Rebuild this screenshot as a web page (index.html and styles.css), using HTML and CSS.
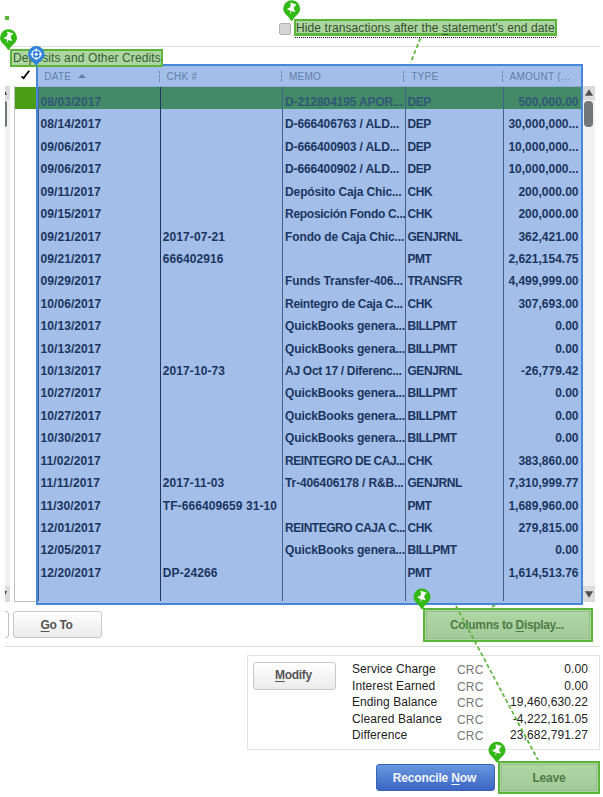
FILE: index.html
```html
<!DOCTYPE html>
<html lang="en">
<head>
<meta charset="utf-8">
<title>Reconcile</title>
<link rel="stylesheet" href="styles.css">
</head>
<body>
<main class="window">
  <header class="options">
    <label class="option"><span class="checkbox"></span><span class="option-text">Hide transactions after the <u>s</u>tatement's end date</span></label>
  </header>
  <section class="heading"><h1>Deposits and Other Credits</h1></section>
  <section class="lists">
    <div class="scroll scroll-left">
      <svg class="arrow" viewBox="0 0 5 14"><path d="M0 5 2 9H0Z" fill="#333"/></svg>
      <span class="thumb"></span>
      <svg class="arrow" viewBox="0 0 5 14"><path d="M0 4H2L0 8Z" fill="#333"/></svg>
    </div>
    <div class="marks">
      <div class="mark-head"><svg width="12" height="12" viewBox="0 0 12 12"><path d="M1.5 7.3 3.6 9.2 6 5.7 9.3 1.7" fill="none" stroke="#000" stroke-width="1.8"/></svg></div>
      <div class="mark-row"></div>
    </div>
    <div class="grid">
      <div class="grid-head">
        <span>DATE <svg class="sort" width="8" height="4" viewBox="0 0 8 4"><path d="M4 0 8 4H0Z" fill="#6080ab"/></svg></span>
        <span>CHK #</span><span>MEMO</span><span>TYPE</span><span>AMOUNT (...</span>
      </div>
      <div class="grid-body" id="rows"></div>
    </div>
    <div class="scroll scroll-right">
      <svg class="arrow" viewBox="0 0 13 14"><path d="M6.5 3 11 10H2Z" fill="#505050"/></svg>
      <span class="thumb"></span>
      <svg class="arrow" viewBox="0 0 13 14"><path d="M2 4H11L6.5 11Z" fill="#505050"/></svg>
    </div>
  </section>
  <section class="toolbar">
    <span class="button-end"></span>
    <button class="button goto"><span><u>G</u>o To</span></button>
    <button class="button columns"><span>Columns to <u>D</u>isplay...</span></button>
  </section>
  <section class="summary">
    <button class="button modify"><span><u>M</u>odify</span></button>
    <div class="totals">
      <span>Service Charge</span><i>CRC</i><b>0.00</b>
      <span>Interest Earned</span><i>CRC</i><b>0.00</b>
      <span>Ending Balance</span><i>CRC</i><b>19,460,630.22</b>
      <span>Cleared Balance</span><i>CRC</i><b>-4,222,161.05</b>
      <span>Difference</span><i>CRC</i><b>23,682,791.27</b>
    </div>
  </section>
  <footer class="actions">
    <button class="button primary"><span>Reconcile <u>N</u>ow</span></button>
    <button class="button leave"><span>Leave</span></button>
  </footer>
  <svg class="overlay" width="603" height="797" viewBox="0 0 603 797">
    <defs>
      <g id="pin">
        <path d="M0 12.5-1 11.5C-3 7-8.5 5-8.5 0A8.5 8.5 0 0 1 8.5 0C8.5 5 3 7 1 11.5Z" fill="#32b916"/>
        <g transform="rotate(18)" fill="#fff"><path d="M-3-5.5H3V-3.9H2V-.6L4 1.1V2.2H.6L0 6-.6 2.2H-4V1.1L-2-.6V-3.9H-3Z"/></g>
      </g>
    </defs>
    <rect x="5" y="16" width="4" height="4" fill="#5ab53a"/>
    <g fill="none" stroke="#5ab53a" stroke-width="1.7" stroke-dasharray="4 2.6">
      <path d="M420.5 38 410.5 63"/><path d="M456 606 538 760"/><path d="M495 605 492 607"/>
    </g>
    <use href="#pin" x="8.5" y="37.7"/>
    <use href="#pin" x="291.7" y="8.7"/>
    <use href="#pin" x="422" y="597"/>
    <use href="#pin" x="497" y="750.3"/>
    <path d="M36.3 67C35 61.5 28 60 28 54.3A8.3 8.3 0 0 1 44.6 54.3C44.6 60 37.6 61.5 36.3 67Z" fill="#2f82dc"/>
    <g fill="none" stroke="#fff" stroke-width="1.2"><circle cx="36.3" cy="54.3" r="4.3"/><path d="M36.3 48.5V51.5M36.3 57V60M30.5 54.3H33.5M39 54.3H42"/></g>
    <circle cx="36.3" cy="54.3" r="1.5" fill="#fff"/>
  </svg>
</main>
<script src="app.js"></script>
</body>
</html>
```
FILE: styles.css
```css
* { box-sizing: border-box; }
body { margin: 0; background: #fff; font-family: "Liberation Sans", Arial, sans-serif; font-size: 12px; color: #222; }
.window { position: relative; width: 603px; height: 797px; overflow: hidden; }
u { text-decoration: underline; text-underline-offset: 1.5px; text-decoration-thickness: 1px; }
.options { height: 46px; padding: 19px 0 0 279px; }
.option { display: flex; align-items: flex-start; gap: 3px; }
.checkbox { width: 12px; height: 12px; margin-top: 4px; border: 1px solid #b4b4b4; border-radius: 2px; background: #d4d4d4; }
.option-text { width: 263px; height: 17px; line-height: 15px; letter-spacing: .09px; white-space: nowrap; color: #344f2e; background: #acd5a0; border: 2px solid #5ab53a; border-bottom-width: 3px; }
.option-text::after { content: ""; display: block; margin: 1px 0 0 -1px; width: 261px; border-top: 1px dotted #222; }
.heading { height: 17px; margin: 0 3px 0 5px; padding-left: 5px; border-top: 1px solid #e2e2e2; }
h1 { position: relative; z-index: 2; width: 153px; height: 18px; margin: 2px 0 0; padding-left: 1px; font-size: 12px; font-weight: 400; line-height: 14px; letter-spacing: .12px; white-space: nowrap; color: #365f31; background: #acd5a0; border: 2px solid #5ab53a; }
.lists { display: flex; height: 542px; padding-left: 5px; }
.scroll { display: flex; flex-direction: column; background: #f1f1f1; height: 516px; margin-top: 23px; }
.arrow { flex: none; width: 100%; height: 14px; background: #dcdcdc; }
.thumb { flex: none; height: 26px; margin: 1px 2px 0 1px; background: #707776; border-radius: 4px; }
.scroll .arrow:last-child { margin-top: auto; height: 16px; }
.scroll-left { width: 5px; }
.scroll-left .thumb { margin: 1px 3px 0 0; border-radius: 0 2px 2px 0; }
.marks { width: 23px; height: 516px; margin: 23px 0 0 4px; border: 1px solid #c0c0c0; border-width: 0 0 1px 1px; }
.mark-head { height: 24px; margin-top: -23px; padding: 6px 0 0 5px; }
.mark-row { height: 22px; background: #4b9d15; }
.grid { width: 547px; height: 541px; margin-top: 1px; margin-left: -1px; background: #a3bee8; border: 2px solid #4787da; }
.grid-head, .row { display: grid; grid-template-columns: 122.3px 122.3px 122.3px 98.3px 1fr; }
.grid-head { height: 21px; border-bottom: 1px solid #91a9cf; font-size: 10px; line-height: 21px; letter-spacing: .25px; color: #6080ab; }
.grid-head span { padding-left: 6.3px; position: relative; white-space: nowrap; }
.grid-head span + span::before { content: ""; position: absolute; left: -1.5px; top: 5px; height: 11px; border-left: 1px dashed #7089b1; }
.sort { margin: 0 0 2px 4px; }
.grid-body { height: 514px; background: linear-gradient(#43618f,#43618f) 0 0/1px 100% no-repeat, linear-gradient(#1d3761,#1d3761) 122px 0/1px 100% no-repeat, linear-gradient(#43618f,#43618f) 244px 0/1px 100% no-repeat, linear-gradient(#43618f,#43618f) 367px 0/1px 100% no-repeat, linear-gradient(#43618f,#43618f) 465px 0/1px 100% no-repeat, linear-gradient(#438a67,#438a67) 0 0/100% 22px no-repeat; }
.row { height: 22.43px; padding-top: 7px; line-height: 16px; font-size: 12px; font-weight: 700; color: #1c355f; white-space: nowrap; letter-spacing: .08px; }
.row:first-child { color: #315877; }
.row span { padding-left: 2.5px; }
.row .memo { letter-spacing: -.14px; }
.row .memo.snug { letter-spacing: -.3px; }
.row .memo.caps { letter-spacing: -.48px; }
.row .type { letter-spacing: -.4px; }
.row .amount { padding: 0 2.5px 0 0; text-align: right; letter-spacing: 0; }
.scroll-right { width: 12px; }
.toolbar { display: flex; height: 42px; margin: 0 3px 0 5px; padding-top: 6px; border-bottom: 1px solid #dedede; }
.button { margin: 0; padding: 0; font: bold 12px/16px "Liberation Sans", Arial, sans-serif; color: #555; background: linear-gradient(#fff,#ebebeb); border: 1px solid #c8c8c8; border-radius: 3px; white-space: nowrap; }
.button-end { width: 4px; height: 27px; border: 1px solid #c4c4c4; border-left: 0; border-radius: 0 3px 3px 0; }
.goto { width: 89px; height: 27px; margin-left: 4px; padding-right: 2px; letter-spacing: -.35px; }
.columns { width: 170px; height: 34px; margin: -3px 0 0 321px; padding-right: 2px; border: 2px solid #5ab53a; border-radius: 0; background: linear-gradient(#afd7a3,#a3c999); color: #507d45; letter-spacing: -.34px; box-shadow: inset 0 0 0 1px #afd7a3, inset 0 0 0 2px #98bd8d; }
.summary { display: flex; width: 353px; height: 95px; margin: 8px 0 0 247px; padding: 6px 11px 0 5px; border: 1px solid #e3e3e3; }
.modify { width: 83px; height: 28px; padding: 0 2px 2px 0; letter-spacing: -.3px; }
.totals { display: grid; grid-template-columns: 105px 40px 1fr; grid-auto-rows: 16.6px; flex: 1; margin-left: 16px; line-height: 15px; letter-spacing: .08px; white-space: nowrap; color: #222; }
.totals i { font-style: normal; color: #777; padding-top: 1px; letter-spacing: .2px; }
.totals b { font-weight: 400; text-align: right; letter-spacing: .1px; }
.actions { display: flex; margin: 11px 0 0 376px; }
.primary { width: 119px; height: 27px; margin-top: 3px; padding-right: 2px; color: #f1f5fc; border-color: #3b62ae; background: linear-gradient(#6797df,#3b65c3); letter-spacing: -.15px; }
.leave { width: 102px; height: 33px; margin-left: 3px; border: 2px solid #5ab53a; border-radius: 0; background: linear-gradient(#afd7a3,#a3c999); color: #507d45; letter-spacing: -.2px; box-shadow: inset 0 0 0 1px #afd7a3, inset 0 0 0 2px #98bd8d; }
.overlay { position: absolute; z-index: 3; left: 0; top: 0; pointer-events: none; }
```
FILE: app.js
```javascript
const rows = [
  ["08/03/2017", "", "D-212804195 APOR...", "DEP", "500,000.00"],
  ["08/14/2017", "", "D-666406763 / ALD...", "DEP", "30,000,000..."],
  ["09/06/2017", "", "D-666400903 / ALD...", "DEP", "10,000,000..."],
  ["09/06/2017", "", "D-666400902 / ALD...", "DEP", "10,000,000..."],
  ["09/11/2017", "", "Depósito Caja Chic...", "CHK", "200,000.00"],
  ["09/15/2017", "", "Reposición Fondo C...", "CHK", "200,000.00"],
  ["09/21/2017", "2017-07-21", "Fondo de Caja Chic...", "GENJRNL", "362,421.00"],
  ["09/21/2017", "666402916", "", "PMT", "2,621,154.75"],
  ["09/29/2017", "", "Funds Transfer-406...", "TRANSFR", "4,499,999.00"],
  ["10/06/2017", "", "Reintegro de Caja C...", "CHK", "307,693.00"],
  ["10/13/2017", "", "QuickBooks genera...", "BILLPMT", "0.00"],
  ["10/13/2017", "", "QuickBooks genera...", "BILLPMT", "0.00"],
  ["10/13/2017", "2017-10-73", "AJ Oct 17 / Diferenc...", "GENJRNL", "-26,779.42"],
  ["10/27/2017", "", "QuickBooks genera...", "BILLPMT", "0.00"],
  ["10/27/2017", "", "QuickBooks genera...", "BILLPMT", "0.00"],
  ["10/30/2017", "", "QuickBooks genera...", "BILLPMT", "0.00"],
  ["11/02/2017", "", "REINTEGRO DE CAJ...", "CHK", "383,860.00"],
  ["11/11/2017", "2017-11-03", "Tr-406406178 / R&B...", "GENJRNL", "7,310,999.77"],
  ["11/30/2017", "TF-666409659 31-10", "", "PMT", "1,689,960.00"],
  ["12/01/2017", "", "REINTEGRO CAJA C...", "CHK", "279,815.00"],
  ["12/05/2017", "", "QuickBooks genera...", "BILLPMT", "0.00"],
  ["12/20/2017", "DP-24266", "", "PMT", "1,614,513.76"]
];
const names = ["date", "code", "memo", "type", "amount"];
const body = document.getElementById("rows");
for (const values of rows) {
  const row = document.createElement("div");
  row.className = "row";
  values.forEach((value, i) => {
    const cell = document.createElement("span");
    cell.className = names[i];
    if (i === 2 && value.startsWith("REINTEGRO")) cell.classList.add("caps");
    if (i === 2 && /^Re|^AJ/.test(value)) cell.classList.add("snug");
    cell.textContent = value;
    row.append(cell);
  });
  body.append(row);
}
```
